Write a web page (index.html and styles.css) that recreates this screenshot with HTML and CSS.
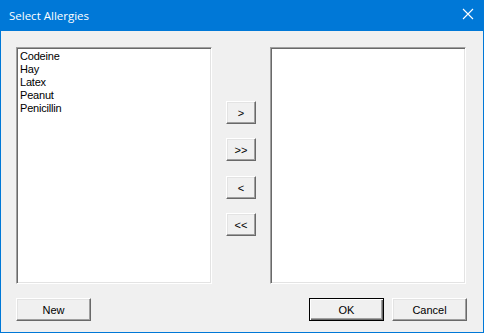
FILE: index.html
```html
<!DOCTYPE html>
<html>
<head>
<meta charset="utf-8">
<link rel="stylesheet" href="styles.css">
</head>
<body>
<div class="window">
  <div class="titlebar">
    <span class="title">Select Allergies</span>
    <svg class="close" width="12" height="12" viewBox="0 0 12 12"><path d="M1 1L11 11M11 1L1 11" stroke="#fff" stroke-width="1.1" fill="none"/></svg>
  </div>
  <div class="content">
    <div class="lists">
      <div class="listbox">
        <div class="item">Codeine</div>
        <div class="item">Hay</div>
        <div class="item">Latex</div>
        <div class="item">Peanut</div>
        <div class="item">Penicillin</div>
      </div>
      <div class="movers">
        <button class="btn small">&gt;</button>
        <button class="btn small">&gt;&gt;</button>
        <button class="btn small extra">&lt;</button>
        <button class="btn small">&lt;&lt;</button>
      </div>
      <div class="listbox"></div>
    </div>
    <div class="footer">
      <button class="btn wide">New</button>
      <div class="spacer"></div>
      <button class="btn wide default">OK</button>
      <button class="btn wide">Cancel</button>
    </div>
  </div>
</div>
</body>
</html>
```
FILE: styles.css
```css
html, body {
  margin: 0;
  padding: 0;
  background: #f0f0f0;
}
.window {
  width: 484px;
  height: 333px;
  box-sizing: border-box;
  border: 1px solid #0078d7;
  border-top: none;
  display: flex;
  flex-direction: column;
  background: #f0f0f0;
}
.titlebar {
  height: 31px;
  margin: 0 -1px;
  background: #0078d7;
  display: flex;
  align-items: center;
  padding: 0 10px 0 9px;
  flex-shrink: 0;
}
.title {
  flex: 1;
  color: #fff;
  font-family: "Open Sans", "Noto Sans", sans-serif;
  font-size: 11.5px;
  padding-bottom: 1px;
}
.close {
  display: block;
  margin-bottom: 3px;
}
.content {
  flex: 1;
  display: flex;
  flex-direction: column;
  padding: 16px 16px 0 15px;
}
.lists {
  display: flex;
  height: 237px;
}
.listbox {
  width: 196px;
  height: 237px;
  box-sizing: border-box;
  background: #fff;
  border-top: 1px solid #a0a0a0;
  border-left: 1px solid #a0a0a0;
  border-right: 1px solid #fff;
  border-bottom: 1px solid #fff;
  box-shadow: inset 1px 1px 0 #696969, inset -1px -1px 0 #e3e3e3;
  padding: 2px 3px;
  font-family: "Liberation Sans", Arial, sans-serif;
  font-size: 11px;
  letter-spacing: -0.2px;
  color: #000;
}
.item {
  height: 13px;
  line-height: 13px;
  padding-left: 0;
}
.movers {
  width: 58px;
  display: flex;
  flex-direction: column;
  align-items: center;
  padding-top: 54px;
  gap: 14px;
}
.movers .extra {
  margin-top: 1px;
}
.btn {
  box-sizing: border-box;
  background: #f0f0f0;
  border-top: 1px solid #fff;
  border-left: 1px solid #fff;
  border-right: 1px solid #696969;
  border-bottom: 1px solid #696969;
  box-shadow: inset -1px -1px 0 #a0a0a0, inset 1px 1px 0 #e3e3e3;
  font-family: "Liberation Sans", Arial, sans-serif;
  font-size: 11px;
  color: #000;
  padding: 0;
  margin: 0;
  height: 23px;
  display: flex;
  align-items: center;
  justify-content: center;
}
.small {
  width: 30px;
}
.footer {
  display: flex;
  margin-top: 14px;
  gap: 8px;
}
.spacer {
  flex: 1;
}
.wide {
  width: 75px;
  height: 23px;
}
.default {
  border: 1px solid #000;
  box-shadow: inset 1px 1px 0 #fff, inset -1px -1px 0 #696969, inset -2px -2px 0 #a0a0a0;
}
```
